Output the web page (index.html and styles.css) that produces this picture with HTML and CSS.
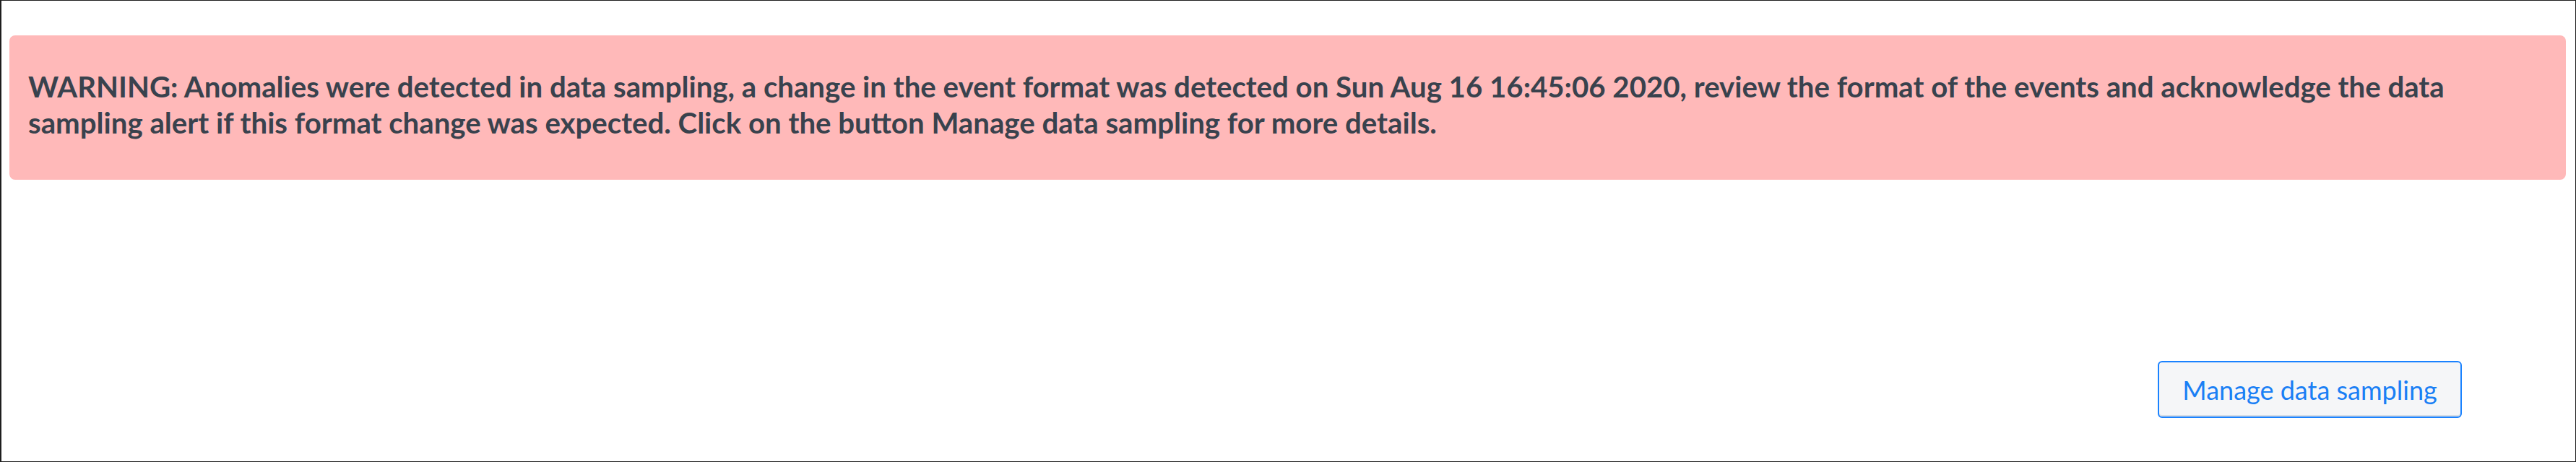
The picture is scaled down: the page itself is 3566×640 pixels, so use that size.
FILE: index.html
```html
<!DOCTYPE html>
<html lang="en">
<head>
<meta charset="utf-8">
<title>Data sampling warning</title>
<link rel="stylesheet" href="styles.css">
</head>
<body>
<div class="frame">
  <div class="alert">
    <p class="alert-text">WARNING: Anomalies were detected in data sampling, a change in the event format was detected on Sun Aug 16 16:45:06 2020, review the format of the events and acknowledge the data sampling alert if this format change was expected. Click on the button Manage data sampling for more details.</p>
  </div>
  <div class="actions">
    <button class="btn" type="button">Manage data sampling</button>
  </div>
</div>
</body>
</html>
```

FILE: styles.css
```css
html, body {
  margin: 0;
  padding: 0;
  background: #ffffff;
}

.frame {
  box-sizing: border-box;
  width: 3566px;
  height: 640px;
  border: 1px solid #1e1e1e;
  border-left-width: 2px;
  padding: 48px 13px 0 11px;
  background: #ffffff;
}

.alert {
  background: #ffb9b9;
  border-radius: 8px;
  padding: 46px 26px 54px 26px;
}

.alert-text {
  margin: 0;
  font-family: Lato, "Open Sans", sans-serif;
  font-weight: 700;
  font-size: 40.2px;
  line-height: 50px;
  color: #39424d;
}

.actions {
  display: flex;
  justify-content: flex-end;
  padding: 251px 144px 0 0;
}

.btn {
  box-sizing: border-box;
  width: 421px;
  height: 79px;
  display: flex;
  align-items: center;
  justify-content: center;
  background: #f5f6f8;
  border: 2px solid #1a82ff;
  border-radius: 6px;
  box-shadow: inset 0 -2px 0 #d7dde4;
  color: #1a7ff5;
  font-family: Lato, "Open Sans", sans-serif;
  font-weight: 400;
  font-size: 36px;
  padding: 0;
  cursor: pointer;
}
```
